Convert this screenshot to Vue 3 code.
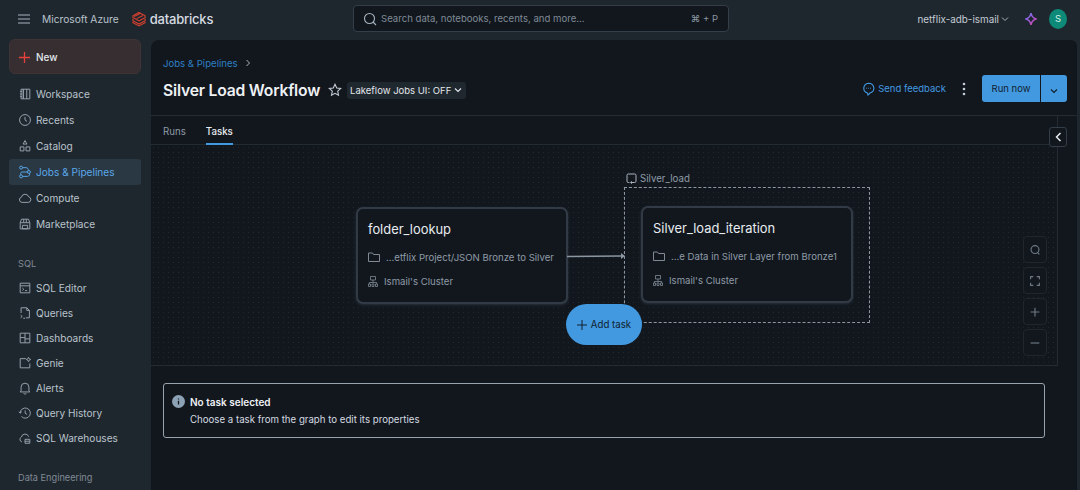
<script setup>
const mainNav = [
  { label: "Workspace", icon: "M6 2.500h7.500v11H6zM3.500 2.500H6v11H3.500zM2.500 5h2M2.500 8h2M2.500 11h2M10 2.500v11" },
  { label: "Recents", icon: "M8 1.800a6.200 6.200 0 1 0 0 12.400A6.200 6.200 0 0 0 8 1.800zM8 4.500V8l2.300 1.600" },
  { label: "Catalog", icon: "M8 1.800l2.200 4H5.800zM2.500 9h4.300v4.600H2.500zM9.200 9h4.300v4.600H9.200z" },
  { label: "Jobs & Pipelines", active: true, icon: "M3.500 1.300a1.700 1.700 0 1 0 0 3.400 1.700 1.700 0 0 0 0-3.400zM3.500 11.300a1.700 1.700 0 1 0 0 3.400 1.700 1.700 0 0 0 0-3.400zM12.500 6.300a1.700 1.700 0 1 0 0 3.400 1.700 1.700 0 0 0 0-3.400zM5.200 3H9a2.500 2.500 0 0 1 2.500 3.500M10.800 8H4.500a2 2 0 0 0-1 3.300M5.200 13H11a2.500 2.500 0 0 0 2-3.500" },
  { label: "Compute", icon: "M4.500 13a3 3 0 0 1-.6-5.900 4.300 4.300 0 0 1 8.300-.4A3.200 3.200 0 0 1 11.800 13z" },
  { label: "Marketplace", icon: "M4 2.500h8l1.500 4v7h-11v-7zM2.500 6.500h11M5 9.500h6v4H5zM6.500 2.500v4M9.500 2.500v4" },
];
const sqlNav = [
  { label: "SQL Editor", icon: "M2.500 2.500h11v11h-11zM2.500 5.500h11M5 8l1.600 1.400L5 10.800M8 11h2.500" },
  { label: "Queries", icon: "M10 2H3.500v6M10 2l3 3v8.500H9M10 2v3h3M3 10.500l1.800 1.500L3 13.500M6 14h2" },
  { label: "Dashboards", icon: "M2.500 2.500h11v11h-11zM8 2.500v11M2.500 7.500H8M8 9h5.500" },
  { label: "Genie", icon: "M9 3H2.500v10.500h11V8.500M12 1.500l.8 1.700 1.700.8-1.700.8-.8 1.700-.8-1.700-1.700-.8 1.700-.8z" },
  { label: "Alerts", icon: "M3.500 11.500V7a4.500 4.500 0 0 1 9 0v4.500l1 1h-11zM6.500 14a1.600 1.600 0 0 0 3 0" },
  { label: "Query History", icon: "M2.500 8A5.800 5.800 0 1 1 4 12M1 6.500L2.500 8.200 4.200 6.600M8.200 5v3.300l2.200 1.300" },
  { label: "SQL Warehouses", icon: "M4.500 12.500a3 3 0 0 1-.6-5.600 4.300 4.300 0 0 1 8.300-.4M8 9.500h5.500V14H8zM8 11.700h5.500" },
];
const zoomButtons = [
  "M8 3a4.500 4.500 0 1 0 0 9 4.500 4.500 0 0 0 0-9zM11 11l2 2",
  "M3 6V3h3M10 3h3v3M13 10v3h-3M6 13H3v-3",
  "M8 3v10M3 8h10",
  "M3 8h10",
];
</script>

<template>
  <div class="app">
    <header class="topbar">
      <div class="brand">
        <svg class="burger" width="12" height="10" viewBox="0 0 12 10">
          <path d="M0 1h12M0 5h12M0 9h12" stroke="#a9b4bf" stroke-width="1.100" />
        </svg>
        <span class="azure">Microsoft Azure</span>
        <svg class="logo" width="14" height="16" viewBox="0 0 15 16" fill="none">
          <path d="M7.500 1L14 4.600v2L7.500 10 1 6.400V4.600zM1 7.600v2.200l6.500 3.600L14 9.800V7.600M1 11v1l6.500 3.400L14 12v-1M2.500 5.400l6.200-3.200M5 7.600l6.600-3.400" stroke="#d3402f" stroke-width="1.200" />
        </svg>
        <span class="databricks">databricks</span>
      </div>
      <div class="search">
        <svg width="14" height="14" viewBox="0 0 14 14" fill="none">
          <circle cx="6.500" cy="6.500" r="5" stroke="#a9b4bf" stroke-width="1.100" />
          <path d="M10 10l3 3" stroke="#a9b4bf" stroke-width="1.100" />
        </svg>
        <span class="search-text">Search data, notebooks, recents, and more...</span>
        <span class="shortcut">⌘ + P</span>
      </div>
      <div class="account">
        <span class="workspace-name">netflix-adb-ismail</span>
        <svg width="8" height="6" viewBox="0 0 8 6" fill="none">
          <path d="M1 1.500l3 3 3-3" stroke="#a9b4bf" />
        </svg>
        <svg class="sparkle" width="12" height="14" viewBox="0 0 12 14" fill="none">
          <path d="M6 1.200c.7 3.200 1.900 4.900 4.800 5.800C7.900 7.900 6.700 9.600 6 12.800 5.300 9.600 4.100 7.900 1.200 7 4.100 6.100 5.300 4.400 6 1.200z" stroke="url(#spark)" stroke-width="1.500" />
          <defs>
            <linearGradient id="spark" x1="0" y1="0" x2="12" y2="14" gradientUnits="userSpaceOnUse">
              <stop stop-color="#5b7cf0" />
              <stop offset="0.55" stop-color="#a855d8" />
              <stop offset="1" stop-color="#e8467c" />
            </linearGradient>
          </defs>
        </svg>
        <span class="avatar">S</span>
      </div>
    </header>

    <div class="body">
      <aside class="sidebar">
        <button class="new-btn">
          <svg width="13" height="13" viewBox="0 0 13 13"><path d="M6.500 1v11M1 6.500h11" stroke="#e5413c" stroke-width="1.300" /></svg>
          New
        </button>
        <nav class="nav main-nav">
          <a v-for="item in mainNav" :key="item.label" class="nav-item" :class="{ active: item.active }">
            <svg width="14" height="14" viewBox="0 0 16 16" fill="none"><path :d="item.icon" stroke="currentColor" stroke-width="1.100" /></svg>
            <span>{{ item.label }}</span>
          </a>
        </nav>
        <div class="nav-title sql-title">SQL</div>
        <nav class="nav sql-nav">
          <a v-for="item in sqlNav" :key="item.label" class="nav-item">
            <svg width="14" height="14" viewBox="0 0 16 16" fill="none"><path :d="item.icon" stroke="currentColor" stroke-width="1.100" /></svg>
            <span>{{ item.label }}</span>
          </a>
        </nav>
        <div class="nav-title de-title">Data Engineering</div>
      </aside>

      <main class="panel">
        <section class="page-head">
          <div class="head-left">
            <div class="crumb">
              <span>Jobs &amp; Pipelines</span>
              <svg width="6" height="8" viewBox="0 0 6 8" fill="none"><path d="M1.500 1l3 3-3 3" stroke="#a9b4bf" /></svg>
            </div>
            <div class="title-row">
              <h1>Silver Load Workflow</h1>
              <svg class="star" width="14" height="14" viewBox="0 0 14 14" fill="none">
                <path d="M7 1.300l1.700 3.700 4 .5-3 2.700.8 4L7 10.300l-3.500 1.900.8-4-3-2.700 4-.5z" stroke="#c3ccd5" stroke-width="1.100" />
              </svg>
              <span class="ui-toggle">
                Lakeflow Jobs UI: OFF
                <svg width="8" height="6" viewBox="0 0 8 6" fill="none"><path d="M1 1.500l3 3 3-3" stroke="#e2e7ec" stroke-width="1.100" /></svg>
              </span>
            </div>
          </div>
          <div class="head-right">
            <a class="feedback">
              <svg width="13" height="14" viewBox="0 0 13 14" fill="none">
                <path d="M6.500 1.200a5.300 5 0 0 1 1.500 9.800L6 13l-.6-2.100A5.300 5 0 0 1 6.500 1.200z" stroke="#4299e0" stroke-width="1.100" />
                <path d="M4 6.200h.8M6.100 6.200h.8M8.200 6.200H9" stroke="#4299e0" />
              </svg>
              Send feedback
            </a>
            <svg class="kebab" width="4" height="14" viewBox="0 0 4 14"><circle cx="2" cy="2" r="1.300" fill="#c3ccd5" /><circle cx="2" cy="7" r="1.300" fill="#c3ccd5" /><circle cx="2" cy="12" r="1.300" fill="#c3ccd5" /></svg>
            <div class="run-group">
              <button class="run-btn">Run now</button>
              <button class="run-caret">
                <svg width="8" height="6" viewBox="0 0 8 6" fill="none"><path d="M1 1.500l3 3 3-3" stroke="#10202e" stroke-width="1.200" /></svg>
              </button>
            </div>
          </div>
        </section>

        <section class="workspace">
          <div class="graph-col">
            <div class="tabs">
              <span class="tab">Runs</span>
              <span class="tab current">Tasks</span>
            </div>
            <div class="canvas">
              <div class="group-label">
                <svg width="11" height="11" viewBox="0 0 11 11" fill="none">
                  <path d="M3.500 9.500H2.300a1.300 1.300 0 0 1-1.300-1.300V2.300A1.300 1.300 0 0 1 2.300 1h6.400A1.300 1.300 0 0 1 10 2.300v5.900a1.300 1.300 0 0 1-1.300 1.300H5M5.800 8.300L4.500 9.500l1.300 1.200" stroke="#a9b4bf" />
                </svg>
                Silver_load
              </div>
              <div class="group-box"></div>

              <article class="task task-a">
                <h2>folder_lookup</h2>
                <div class="task-line path">
                  <svg width="12" height="10" viewBox="0 0 12 10" fill="none"><path d="M.5 1h4l1 1.500h6V9.500H.5z" stroke="#7f8a95" /></svg>
                  <span>...etflix Project/JSON Bronze to Silver</span>
                </div>
                <div class="task-line">
                  <svg width="10" height="11" viewBox="0 0 10 11" fill="none"><path d="M2.500.5h5v3.500h-5zM5 4v2.500M1.300 8V6.500h7.400V8M.5 8h2v2.500h-2zM4 8h2v2.500H4zM7.500 8h2v2.500h-2z" stroke="#7f8a95" stroke-width=".8" /></svg>
                  <span>Ismail's Cluster</span>
                </div>
              </article>

              <article class="task task-b">
                <h2>Silver_load_iteration</h2>
                <div class="task-line path">
                  <svg width="12" height="10" viewBox="0 0 12 10" fill="none"><path d="M.5 1h4l1 1.500h6V9.500H.5z" stroke="#7f8a95" /></svg>
                  <span>...e Data in Silver Layer from Bronze1</span>
                </div>
                <div class="task-line">
                  <svg width="10" height="11" viewBox="0 0 10 11" fill="none"><path d="M2.500.5h5v3.500h-5zM5 4v2.500M1.300 8V6.500h7.400V8M.5 8h2v2.500h-2zM4 8h2v2.500H4zM7.500 8h2v2.500h-2z" stroke="#7f8a95" stroke-width=".8" /></svg>
                  <span>Ismail's Cluster</span>
                </div>
              </article>

              <svg class="edge" width="60" height="8" viewBox="0 0 60 8" fill="none">
                <path d="M0 4.500L54 4" stroke="#8b96a1" stroke-width="1.400" />
                <path d="M54 1l4 3-4 3z" fill="#8b96a1" />
              </svg>

              <button class="add-task">
                <svg width="10" height="10" viewBox="0 0 10 10"><path d="M5 0v10M0 5h10" stroke="#10202e" stroke-width="1" /></svg>
                Add task
              </button>

              <div class="zoom-tools">
                <button v-for="d in zoomButtons" :key="d" class="zoom-btn">
                  <svg width="14" height="14" viewBox="0 0 16 16" fill="none"><path :d="d" stroke="#6f7a85" stroke-width="1.300" /></svg>
                </button>
              </div>
            </div>
            <div class="detail">
              <div class="notice">
                <svg class="info" width="13" height="13" viewBox="0 0 13 13">
                  <circle cx="6.500" cy="6.500" r="6.500" fill="#8ea2b6" />
                  <path d="M6.500 5.800v3.600M6.500 3.400v1.100" stroke="#12171e" stroke-width="1.300" />
                </svg>
                <div>
                  <div class="notice-title">No task selected</div>
                  <div class="notice-text">Choose a task from the graph to edit its properties</div>
                </div>
              </div>
            </div>
          </div>
          <div class="side-rail">
            <button class="collapse">
              <svg width="7" height="10" viewBox="0 0 7 10" fill="none"><path d="M5.500 1l-4 4 4 4" stroke="#e8ecf0" stroke-width="1.500" /></svg>
            </button>
          </div>
        </section>
      </main>
    </div>
  </div>
</template>

<style>
html,
body {
  margin: 0;
  background: #1f272e;
}
</style>

<style scoped>
.app {
  width: 1080px;
  height: 490px;
  overflow: hidden;
  background: #1f272e;
  font-family: Inter, "Liberation Sans", sans-serif;
  font-size: 10px;
  color: #c3ccd5;
  display: flex;
  flex-direction: column;
}

button {
  font-family: inherit;
  border: 0;
  padding: 0;
}

.topbar {
  height: 40px;
  flex: none;
  display: flex;
  align-items: center;
}

.brand {
  width: 353px;
  flex: none;
  display: flex;
  align-items: center;
  padding-left: 18px;
  box-sizing: border-box;
  margin-top: -2px;
}

.azure {
  margin-left: 12px;
  font-size: 10.200px;
  color: #b9c3cc;
}

.logo {
  margin-left: 13px;
}

.databricks {
  margin-left: 4px;
  font-size: 13px;
  font-weight: 500;
  letter-spacing: -0.2px;
  color: #d5dbe1;
}

.search {
  width: 376px;
  height: 27px;
  box-sizing: border-box;
  margin-top: -3px;
  padding: 0 10px 0 9px;
  background: #12171e;
  border: 1px solid #333e49;
  border-radius: 4px;
  display: flex;
  align-items: center;
  gap: 4px;
}

.search-text {
  flex: 1;
  font-size: 9.600px;
  color: #7f8a95;
}

.shortcut {
  color: #8b96a1;
  font-size: 9.500px;
}

.account {
  flex: 1;
  display: flex;
  align-items: center;
  justify-content: flex-end;
  padding-right: 13px;
  margin-top: -3px;
}

.workspace-name {
  font-size: 9.900px;
  color: #c3ccd5;
  margin-right: 2px;
}

.sparkle {
  margin-left: 16px;
}

.avatar {
  margin-left: 12px;
  width: 18px;
  height: 20px;
  border-radius: 50%;
  background: #0d8a78;
  color: #d8efea;
  font-size: 9.500px;
  display: flex;
  align-items: center;
  justify-content: center;
}

.body {
  flex: 1;
  display: flex;
  min-height: 0;
}

.sidebar {
  width: 151px;
  flex: none;
  box-sizing: border-box;
  padding: 0 10px 0 9px;
}

.new-btn {
  width: 132px;
  height: 35px;
  margin-top: -1px;
  padding: 1px 0 0 8px;
  display: flex;
  align-items: center;
  gap: 5px;
  background: #372e31;
  border: 1px solid #3f3336;
  border-radius: 6px;
  color: #e2e7ec;
  font-size: 10px;
  font-weight: 500;
}

.nav {
  display: flex;
  flex-direction: column;
}

.main-nav {
  margin-top: 7px;
}

.nav-item {
  height: 26px;
  display: flex;
  align-items: center;
  gap: 4px;
  padding-left: 9px;
  border-radius: 3px;
  color: #b9c3cc;
  font-size: 10.100px;
}

.nav-item svg {
  color: #97a3ae;
  flex: none;
}

.nav-item.active {
  background: #2a3844;
  color: #5aa8ea;
}

.nav-item.active svg {
  color: #5aa8ea;
}

.sql-nav .nav-item {
  height: 25px;
}

.nav-title {
  color: #7f8a95;
  font-size: 9.200px;
  padding-left: 9px;
  line-height: 12px;
}

.sql-title {
  margin-top: 21px;
  margin-bottom: 5px;
}

.de-title {
  margin-top: 22px;
}

.panel {
  flex: 1;
  margin-right: 3px;
  background: #12171e;
  border-top-left-radius: 8px;
  border-top-right-radius: 6px;
  display: flex;
  flex-direction: column;
  min-width: 0;
}

.page-head {
  height: 76px;
  flex: none;
  box-sizing: border-box;
  border-bottom: 1px solid #232b33;
  padding: 16px 10px 0 12px;
  display: flex;
  justify-content: space-between;
}

.crumb {
  display: flex;
  align-items: center;
  gap: 7px;
  height: 14px;
  color: #2e7fc4;
  font-size: 9.600px;
}

.title-row {
  display: flex;
  align-items: center;
  margin-top: 8px;
  height: 24px;
}

h1 {
  margin: 0;
  font-size: 15.700px;
  font-weight: 600;
  letter-spacing: -0.2px;
  color: #eef1f4;
}

.star {
  margin-left: 8px;
}

.ui-toggle {
  margin-left: 5px;
  height: 17px;
  padding: 0 4px 0 3px;
  display: flex;
  align-items: center;
  gap: 3px;
  border-radius: 3px;
  background: #20282f;
  color: #e2e7ec;
  font-size: 9.500px;
}

.head-right {
  display: flex;
  align-items: center;
  height: 27px;
  margin-top: 19px;
}

.feedback {
  display: flex;
  align-items: center;
  gap: 3px;
  color: #4299e0;
  font-size: 9.500px;
}

.kebab {
  margin-left: 16px;
}

.run-group {
  margin-left: 16px;
  display: flex;
  height: 27px;
}

.run-btn {
  width: 58px;
  background: #4299e0;
  border-radius: 3px 0 0 3px;
  color: #10202e;
  font-size: 9.500px;
}

.run-caret {
  width: 26px;
  margin-left: 1px;
  background: #4299e0;
  border-radius: 0 3px 3px 0;
}

.workspace {
  flex: 1;
  display: flex;
  min-height: 0;
}

.graph-col {
  width: 906px;
  flex: none;
  display: flex;
  flex-direction: column;
}

.tabs {
  height: 29px;
  flex: none;
  box-sizing: border-box;
  border-bottom: 1px solid #232b33;
  padding-left: 12px;
  display: flex;
  gap: 20px;
}

.tab {
  height: 29px;
  box-sizing: border-box;
  line-height: 32px;
  color: #8f9ba6;
  font-size: 9.700px;
}

.tab.current {
  color: #e8ecf0;
  font-weight: 500;
  border-bottom: 2px solid #4299e0;
}

.canvas {
  height: 221px;
  flex: none;
  position: relative;
  box-sizing: border-box;
  border-bottom: 1px solid #232b33;
  background-color: #12171e;
  background-image: radial-gradient(circle, #20272f 0.7px, transparent 0.8px);
  background-size: 5px 5px;
}

.group-label {
  position: absolute;
  left: 475px;
  top: 28px;
  display: flex;
  align-items: center;
  gap: 3px;
  color: #8f9ba6;
  font-size: 9.700px;
}

.group-box {
  position: absolute;
  left: 473px;
  top: 42px;
  width: 246px;
  height: 136px;
  box-sizing: border-box;
  border: 1px dashed #8b96a1;
}

.task {
  position: absolute;
  width: 212px;
  height: 97px;
  box-sizing: border-box;
  padding: 12px 10px 10px;
  background: #12171e;
  border: 2px solid #323b45;
  border-radius: 7px;
  box-shadow: 0 1px 3px #2a323b;
}

.task-a {
  left: 205px;
  top: 62px;
}

.task-b {
  left: 490px;
  top: 61px;
}

h2 {
  margin: 0 0 11px;
  font-size: 12.900px;
  font-weight: 400;
  line-height: 18px;
  color: #e8ecf0;
}

.task-line {
  display: flex;
  align-items: center;
  gap: 6px;
  height: 14px;
  margin-bottom: 10px;
  color: #8f9ba6;
  font-size: 9.600px;
  white-space: nowrap;
}

.task-line svg {
  flex: none;
}

.edge {
  position: absolute;
  left: 416px;
  top: 107px;
}

.add-task {
  position: absolute;
  left: 415px;
  top: 159px;
  width: 76px;
  height: 41px;
  border-radius: 21px;
  background: #4299e0;
  color: #10202e;
  font-size: 9.700px;
  display: flex;
  align-items: center;
  justify-content: center;
  gap: 4px;
}

.zoom-tools {
  position: absolute;
  right: 10px;
  top: 91px;
  display: flex;
  flex-direction: column;
  gap: 4px;
}

.zoom-btn {
  width: 24px;
  height: 27px;
  box-sizing: border-box;
  background: #12171e;
  border: 1px solid #1f262d;
  border-radius: 4px;
  display: flex;
  align-items: center;
  justify-content: center;
}

.detail {
  flex: 1;
  padding: 17px 0 0 12px;
}

.notice {
  width: 882px;
  height: 55px;
  box-sizing: border-box;
  padding: 11px 8px;
  display: flex;
  gap: 5px;
  border: 1px solid #97a3ae;
  border-radius: 3px;
}

.info {
  flex: none;
}

.notice-title {
  color: #eef1f4;
  font-size: 10px;
  font-weight: 600;
  line-height: 14px;
}

.notice-text {
  margin-top: 4px;
  color: #d5dbe1;
  font-size: 9.660px;
  line-height: 14px;
}

.side-rail {
  flex: 1;
  height: 250px;
  box-sizing: border-box;
  position: relative;
  border-left: 1px solid #232b33;
}

.collapse {
  position: absolute;
  left: -9px;
  top: 11px;
  width: 18px;
  height: 20px;
  background: #12171e;
  border: 1px solid #333e49;
  border-radius: 3px;
  display: flex;
  align-items: center;
  justify-content: center;
}
</style>
